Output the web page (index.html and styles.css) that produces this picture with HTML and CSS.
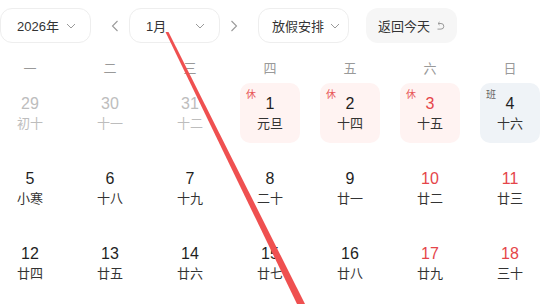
FILE: index.html
```html
<!DOCTYPE html>
<html lang="zh-CN">
<head>
<meta charset="utf-8">
<title>日历</title>
<link rel="stylesheet" href="styles.css">
</head>
<body>
<div class="page">
  <div class="toolbar">
    <div class="select year"><span>2026年</span><svg class="chev" width="10" height="6" viewBox="0 0 10 6"><polyline points="1,1 5,5 9,1"/></svg></div>
    <div class="nav prev"><svg width="8" height="12" viewBox="0 0 8 12"><polyline points="6.5,1 1.5,6 6.5,11"/></svg></div>
    <div class="select month"><span>1月</span><svg class="chev" width="10" height="6" viewBox="0 0 10 6"><polyline points="1,1 5,5 9,1"/></svg></div>
    <div class="nav next"><svg width="8" height="12" viewBox="0 0 8 12"><polyline points="1.5,1 6.5,6 1.5,11"/></svg></div>
    <div class="select holiday"><span>放假安排</span><svg class="chev" width="10" height="6" viewBox="0 0 10 6"><polyline points="1,1 5,5 9,1"/></svg></div>
    <div class="today"><span>返回今天</span><svg class="ret" width="10" height="10" viewBox="0 0 10 10"><path d="M3 2.5 H6 A2.8 2.8 0 0 1 6 8.1 H2.5"/><polyline points="4.6,1 3,2.5 4.6,4"/></svg></div>
  </div>

  <div class="weekdays">
    <div>一</div><div>二</div><div>三</div><div>四</div><div>五</div><div>六</div><div>日</div>
  </div>

  <div class="days">
    <div class="cell dim"><div class="num">29</div><div class="lunar">初十</div></div>
    <div class="cell dim"><div class="num">30</div><div class="lunar">十一</div></div>
    <div class="cell dim"><div class="num">31</div><div class="lunar">十二</div></div>
    <div class="cell rest"><span class="tag">休</span><div class="num">1</div><div class="lunar">元旦</div></div>
    <div class="cell rest"><span class="tag">休</span><div class="num">2</div><div class="lunar">十四</div></div>
    <div class="cell rest"><span class="tag">休</span><div class="num red">3</div><div class="lunar">十五</div></div>
    <div class="cell work"><span class="tag">班</span><div class="num">4</div><div class="lunar">十六</div></div>

    <div class="cell"><div class="num">5</div><div class="lunar">小寒</div></div>
    <div class="cell"><div class="num">6</div><div class="lunar">十八</div></div>
    <div class="cell"><div class="num">7</div><div class="lunar">十九</div></div>
    <div class="cell"><div class="num">8</div><div class="lunar">二十</div></div>
    <div class="cell"><div class="num">9</div><div class="lunar">廿一</div></div>
    <div class="cell"><div class="num red">10</div><div class="lunar">廿二</div></div>
    <div class="cell"><div class="num red">11</div><div class="lunar">廿三</div></div>

    <div class="cell"><div class="num">12</div><div class="lunar">廿四</div></div>
    <div class="cell"><div class="num">13</div><div class="lunar">廿五</div></div>
    <div class="cell"><div class="num">14</div><div class="lunar">廿六</div></div>
    <div class="cell"><div class="num">15</div><div class="lunar">廿七</div></div>
    <div class="cell"><div class="num">16</div><div class="lunar">廿八</div></div>
    <div class="cell"><div class="num red">17</div><div class="lunar">廿九</div></div>
    <div class="cell"><div class="num red">18</div><div class="lunar">三十</div></div>
  </div>

  <svg class="annot" width="542" height="304" viewBox="0 0 542 304"><polygon points="165.5,32 168.5,32 305,304 297,304"/></svg>
</div>
</body>
</html>
```

FILE: styles.css
```css
* { box-sizing: border-box; }
html, body { margin: 0; padding: 0; background: #fff; }
body {
  font-family: "Liberation Sans", "Noto Sans CJK SC", sans-serif;
  color: #222;
  width: 542px;
  height: 304px;
  overflow: hidden;
}
.page { position: relative; width: 542px; height: 304px; }

.toolbar {
  display: flex;
  align-items: center;
  padding-top: 8px;
  height: 43px;
}
.select {
  display: flex;
  align-items: center;
  justify-content: space-between;
  height: 35px;
  width: 91px;
  border: 1px solid #eeeeee;
  border-radius: 12px;
  padding: 0 14px 0 16px;
  font-size: 13px;
  color: #333;
}
.select.holiday {
  justify-content: flex-start;
  gap: 6px;
  padding: 0 8px 0 13px;
  margin-left: 10px;
}
.chev polyline { fill: none; stroke: #9a9a9a; stroke-width: 1; }

.nav {
  width: 28px;
  height: 35px;
  display: flex;
  align-items: center;
  justify-content: center;
}
.nav.prev { margin-left: 10px; }
.nav polyline { fill: none; stroke: #9a9a9a; stroke-width: 1.1; }

.today {
  display: flex;
  align-items: center;
  gap: 5px;
  height: 35px;
  width: 91px;
  margin-left: 17px;
  padding-left: 12px;
  border-radius: 12px;
  background: #f6f6f6;
  font-size: 13px;
  color: #333;
}
.ret path, .ret polyline { fill: none; stroke: #9a9a9a; stroke-width: 1; }

.weekdays {
  display: grid;
  grid-template-columns: repeat(7, 60px);
  column-gap: 20px;
  margin-top: 14px;
  height: 20px;
  align-items: center;
  font-size: 13px;
  color: #999;
  text-align: center;
}
.days {
  display: grid;
  grid-template-columns: repeat(7, 60px);
  grid-auto-rows: 60px;
  column-gap: 20px;
  row-gap: 15px;
  margin-top: 6px;
}
.cell {
  position: relative;
  display: flex;
  flex-direction: column;
  align-items: center;
  justify-content: center;
  border-radius: 10px;
  padding-top: 2px;
}
.num { font-size: 16px; line-height: 20px; color: #1f1f1f; }
.lunar { font-size: 13px; line-height: 20px; color: #333; }
.num.red { color: #e5454a; }
.cell.dim .num, .cell.dim .lunar { color: #bdbdbd; }
.cell.rest { background: #fff3f2; }
.cell.work { background: #eff3f7; }
.tag {
  position: absolute;
  left: 6px;
  top: 6px;
  font-size: 10px;
  line-height: 12px;
}
.rest .tag { color: #e85a5a; }
.work .tag { color: #666; }

.annot {
  position: absolute;
  left: 0;
  top: 0;
  pointer-events: none;
}
.annot polygon { fill: #ef5050; }
```
